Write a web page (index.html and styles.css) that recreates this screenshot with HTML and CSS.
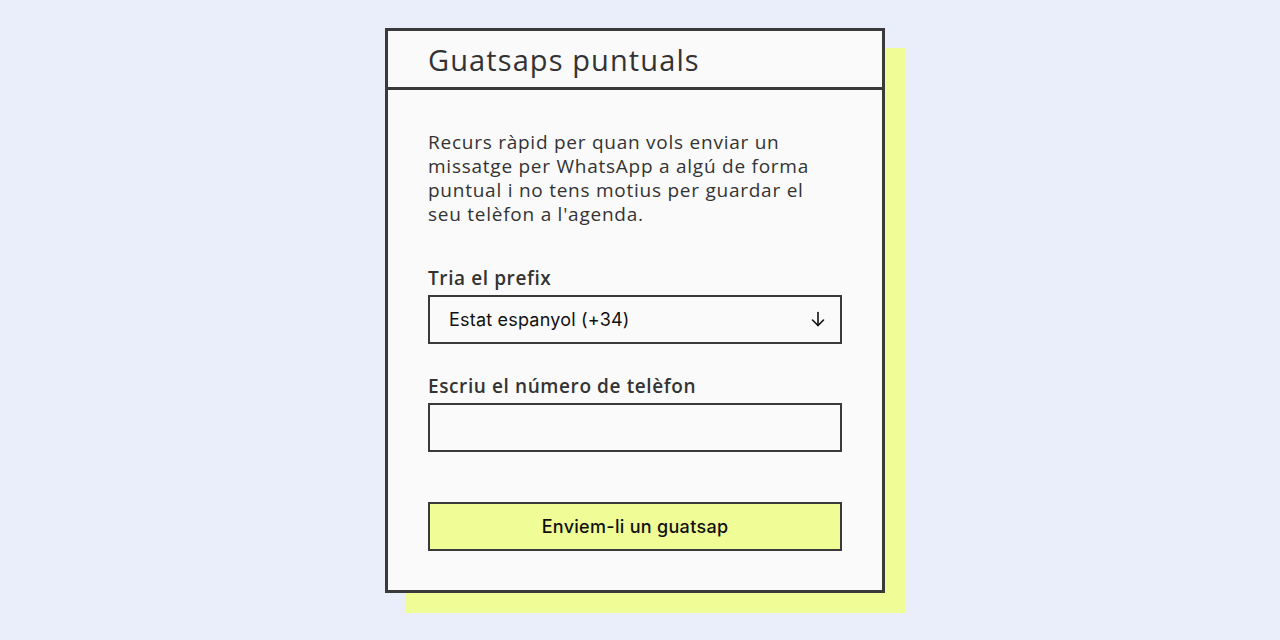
FILE: index.html
```html
<!DOCTYPE html>
<html lang="ca">
<head>
<meta charset="UTF-8">
<meta name="viewport" content="width=device-width, initial-scale=1.0">
<link rel="stylesheet" href="styles.css">
<title>Guatsaps puntuals</title>
</head>
<body>
  <main class="card">
    <header class="card-header">
      <h1>Guatsaps puntuals</h1>
    </header>
    <form class="card-body" onsubmit="return false;">
      <p class="intro">Recurs ràpid per quan vols enviar un missatge per WhatsApp a algú de forma puntual i no tens motius per guardar el seu telèfon a l'agenda.</p>

      <label class="field-label" for="prefix">Tria el prefix</label>
      <div class="select-wrap">
        <select id="prefix" class="field">
          <option value="34">Estat espanyol (+34)</option>
          <option value="376">Andorra (+376)</option>
          <option value="33">França (+33)</option>
        </select>
        <svg class="select-arrow" width="14" height="16" viewBox="0 0 14 16" fill="none" stroke="#111" stroke-width="1.6" stroke-linecap="round" stroke-linejoin="round">
          <path d="M7 1.5v13"/>
          <path d="M1.5 9l5.5 5.5 5.5-5.5"/>
        </svg>
      </div>

      <label class="field-label second" for="phone">Escriu el número de telèfon</label>
      <input id="phone" class="field" type="tel">

      <button class="send" type="submit">Enviem-li un guatsap</button>
    </form>
  </main>
</body>
</html>
```

FILE: styles.css
```css
* {
  box-sizing: border-box;
  margin: 0;
  padding: 0;
}

body {
  background-color: #eaeefa;
  font-family: "Open Sans", sans-serif;
  color: #333333;
  display: flex;
  justify-content: center;
  align-items: flex-start;
  padding-top: 28px;
  padding-right: 10px;
  min-height: 640px;
}

.card {
  width: 500px;
  background-color: #fafafa;
  border: 3px solid #3a3a3a;
  box-shadow: 20px 20px 0 #f0fc96;
}

.card-header {
  height: 59px;
  border-bottom: 3px solid #3a3a3a;
  padding: 0 40px;
  display: flex;
  align-items: center;
}

.card-header h1 {
  font-size: 29px;
  font-weight: 400;
  letter-spacing: 1.1px;
  color: #333333;
}

.card-body {
  display: flex;
  flex-direction: column;
  padding: 40px 40px 39px;
}

.intro {
  font-size: 19px;
  line-height: 24px;
  letter-spacing: 0.75px;
  margin-bottom: 40px;
}

.field-label {
  font-size: 19px;
  line-height: 24px;
  font-weight: 600;
  letter-spacing: 0.6px;
  margin-bottom: 5px;
}

.field-label.second {
  margin-top: 30px;
}

.select-wrap {
  position: relative;
}

.field {
  width: 100%;
  height: 49px;
  border: 2px solid #3a3a3a;
  background-color: #fafafa;
  font-family: "Inter", sans-serif;
  font-size: 18px;
  letter-spacing: 0.2px;
  color: #111111;
  padding: 0 19px;
  border-radius: 0;
  outline: none;
}

select.field {
  appearance: none;
  -webkit-appearance: none;
}

.select-arrow {
  position: absolute;
  right: 17px;
  top: 16px;
  pointer-events: none;
}

.send {
  margin-top: 50px;
  height: 49px;
  border: 2px solid #3a3a3a;
  background-color: #f0fc96;
  font-family: "Inter", sans-serif;
  font-size: 18px;
  font-weight: 500;
  letter-spacing: 0.3px;
  color: #111111;
  cursor: pointer;
}
```
